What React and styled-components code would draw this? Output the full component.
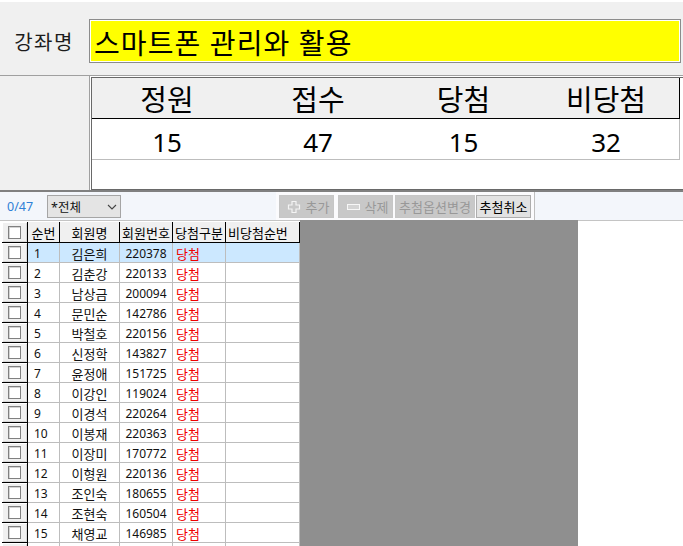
import React from "react"
import styled, { createGlobalStyle } from "styled-components"

const FONT = `"Noto Sans", "Noto Sans CJK KR", sans-serif`

const Global = createGlobalStyle`
    html, body {
        margin: 0;
        padding: 0;
        background: #fff;
        overflow: hidden;
    }
    #root {
        width: 683px;
        height: 546px;
        overflow: hidden;
    }
`

const Page = styled.div`
    width: 683px;
    height: 546px;
    padding-top: 2px;
    box-sizing: border-box;
    display: flex;
    flex-direction: column;
    font-family: ${FONT};
    overflow: hidden;
`

const TitleRow = styled.div`
    height: 74px;
    flex: none;
    box-sizing: border-box;
    background: #f0f0f0;
    border-bottom: 1px solid #a0a0a0;
    display: flex;
    align-items: flex-start;
    padding: 17px 2px 0 0;
`

const TitleLabel = styled.div`
    width: 89px;
    flex: none;
    height: 44px;
    box-sizing: border-box;
    padding-right: 1px;
    display: flex;
    align-items: center;
    justify-content: center;
    font-size: 20px;
    letter-spacing: 1.5px;
    color: #1c1c1c;
`

const TitleValue = styled.div`
    flex: 1;
    height: 44px;
    box-sizing: border-box;
    border: 1px solid #8c8c8c;
    padding: 1px;
    background: #fff;
`

const TitleFill = styled.div`
    height: 100%;
    box-sizing: border-box;
    background: #ffff00;
    display: flex;
    align-items: center;
    padding: 2px 0 0 3px;
    font-size: 28px;
    letter-spacing: 1.1px;
    color: #000;
`

const StatsRow = styled.div`
    height: 116px;
    flex: none;
    display: flex;
    box-sizing: border-box;
    border-bottom: 2px solid #808080;
`

const StatsSide = styled.div`
    width: 90px;
    flex: none;
    background: #f0f0f0;
    border-right: 1px solid #a0a0a0;
    box-sizing: border-box;
`

const StatsBox = styled.div`
    flex: 1;
    margin: 1px 0 0 1px;
    border-top: 1px solid #696969;
    border-left: 1px solid #696969;
    border-bottom: 1px solid #696969;
    background: #fff;
    display: flex;
    flex-direction: column;
`

const StatsHead = styled.div`
    height: 41px;
    box-sizing: border-box;
    width: 588px;
    background: #f0f0f0;
    border-bottom: 1px solid #000;
    border-right: 1px solid #000;
    display: flex;
`

const StatsBody = styled.div`
    height: 41px;
    width: 588px;
    box-sizing: border-box;
    border-bottom: 1px solid #bdbdbd;
    border-right: 1px solid #bdbdbd;
    display: flex;
`

const StatsCell = styled.div`
    width: ${p => p.$w}px;
    flex: none;
    display: flex;
    align-items: center;
    justify-content: center;
    box-sizing: border-box;
    padding-top: ${p => (p.$head ? 0 : 5)}px;
    font-size: ${p => (p.$head ? 29 : 26)}px;
    color: #000;
`

const Toolbar = styled.div`
    height: 29px;
    flex: none;
    box-sizing: border-box;
    background: #f3f6fb;
    border-bottom: 1px solid #c4c4c4;
    display: flex;
    align-items: flex-start;
`

const Count = styled.div`
    width: 47px;
    flex: none;
    padding: 6px 0 0 7px;
    box-sizing: border-box;
    font-size: 12.5px;
    color: #2f7fd6;
`

const Select = styled.div`
    width: 74px;
    height: 23px;
    flex: none;
    margin-top: 3px;
    box-sizing: border-box;
    border: 1px solid #a5a5a5;
    background: #e4e4e4;
    display: flex;
    align-items: center;
    justify-content: space-between;
    padding: 0 3px 0 3px;
    font-size: 12.5px;
    color: #111;
`

const ButtonGroup = styled.div`
    margin-left: 155px;
    height: 28px;
    flex: none;
    width: 259px;
    box-sizing: border-box;
    background: #fbfbfd;
    display: flex;
    padding: 3px 0 0 3px;
    border-right: 1px solid #bfbfbf;
`

const Button = styled.div`
    height: 23px;
    box-sizing: border-box;
    width: ${p => p.$w}px;
    margin-right: ${p => p.$gap || 0}px;
    padding-left: ${p => p.$pad || 0}px;
    flex: none;
    display: flex;
    align-items: center;
    justify-content: center;
    gap: 5px;
    border: 1px solid ${p => (p.$off ? "#c6c6c6" : "#adadad")};
    background: ${p => (p.$off ? "#c8c8c8" : "#e2e2e2")};
    color: ${p => (p.$off ? "#989898" : "#000")};
    font-size: 13px;
    white-space: nowrap;
`

const GridArea = styled.div`
    flex: 1;
    display: flex;
    min-height: 0;
`

const Grid = styled.div`
    width: 300px;
    flex: none;
    padding: 1px 0 0 2px;
    box-sizing: border-box;
`

const Blank = styled.div`
    width: 278px;
    flex: none;
    background: #8f8f8f;
    margin-top: -1px;
`

const Row = styled.div`
    display: flex;
    height: ${p => (p.$head ? 21 : 20)}px;
    box-sizing: border-box;
    background: ${p => (p.$active ? "#cce8ff" : "#fff")};
`

const CheckCell = styled.div`
    width: 26px;
    flex: none;
    box-sizing: border-box;
    background: #f0f0f0;
    border-right: 1px solid #000;
    border-bottom: 1px solid #000;
    box-shadow: inset 1px 1px 0 #fff, inset -1px -1px 0 #d9d9d9;
    display: flex;
    align-items: center;
    justify-content: center;
`

const Box = styled.span`
    width: 13px;
    height: 13px;
    box-sizing: border-box;
    display: block;
    background: #fff;
    border: 1px solid #808080;
    box-shadow: inset 1px 1px 0 #d4d4d4;
`

const Head = styled.div`
    width: ${p => p.$w}px;
    flex: none;
    box-sizing: border-box;
    background: #f0f0f0;
    border-right: 1px solid #000;
    border-bottom: 1px solid #000;
    display: flex;
    align-items: center;
    justify-content: ${p => (p.$left ? "flex-start" : "center")};
    padding-left: ${p => p.$left || 0}px;
    font-size: 13px;
    color: #000;
    white-space: nowrap;
`

const Cell = styled.div`
    width: ${p => p.$w}px;
    flex: none;
    box-sizing: border-box;
    border-right: 1px solid #bdbdbd;
    border-bottom: 1px solid #bdbdbd;
    display: flex;
    align-items: center;
    justify-content: ${p => (p.$left ? "flex-start" : "center")};
    padding-top: 1px;
    padding-left: ${p => p.$left || 0}px;
    font-size: ${p => p.$size || 12}px;
    color: ${p => p.$color || "#111"};
    white-space: nowrap;
`

const columns = [
    ["순번", 32],
    ["회원명", 60],
    ["회원번호", 53],
    ["당첨구분", 53],
    ["비당첨순번", 74, 2],
]

const members = [
    ["김은희", "220378"],
    ["김춘강", "220133"],
    ["남상금", "200094"],
    ["문민순", "142786"],
    ["박철호", "220156"],
    ["신정학", "143827"],
    ["윤정애", "151725"],
    ["이강인", "119024"],
    ["이경석", "220264"],
    ["이봉재", "220363"],
    ["이장미", "170772"],
    ["이형원", "220136"],
    ["조인숙", "180655"],
    ["조현숙", "160504"],
    ["채영교", "146985"],
]

function PlusIcon() {
    return (
        <svg width="14" height="14" viewBox="0 0 14 14" fill="none">
            <path
                d="M5 1.5h4v3.5h3.5v4H9v3.5H5V9H1.5V5H5z"
                stroke="#f4f4f4"
                strokeWidth="1.2"
            />
        </svg>
    )
}

function MinusIcon() {
    return (
        <svg width="13" height="8" viewBox="0 0 13 8" fill="none">
            <rect x="0.5" y="1.5" width="12" height="5" fill="#d4d4d4" stroke="#f7f7f7" />
        </svg>
    )
}

function Chevron() {
    return (
        <svg width="10" height="6" viewBox="0 0 10 6" fill="none">
            <path d="M1 1l4 4 4-4" stroke="#444" strokeWidth="1.1" />
        </svg>
    )
}

function App() {
    return (
        <Page>
            <Global />
            <TitleRow>
                <TitleLabel>강좌명</TitleLabel>
                <TitleValue>
                    <TitleFill>스마트폰 관리와 활용</TitleFill>
                </TitleValue>
            </TitleRow>

            <StatsRow>
                <StatsSide />
                <StatsBox>
                    <StatsHead>
                        <StatsCell $head $w={150}>정원</StatsCell>
                        <StatsCell $head $w={152}>접수</StatsCell>
                        <StatsCell $head $w={139}>당첨</StatsCell>
                        <StatsCell $head $w={146}>비당첨</StatsCell>
                    </StatsHead>
                    <StatsBody>
                        <StatsCell $w={150}>15</StatsCell>
                        <StatsCell $w={152}>47</StatsCell>
                        <StatsCell $w={139}>15</StatsCell>
                        <StatsCell $w={146}>32</StatsCell>
                    </StatsBody>
                </StatsBox>
            </StatsRow>

            <Toolbar>
                <Count>0/47</Count>
                <Select>
                    <span>*전체</span>
                    <Chevron />
                </Select>
                <ButtonGroup>
                    <Button $off $w={55} $gap={4} $pad={3}>
                        <PlusIcon />
                        추가
                    </Button>
                    <Button $off $w={55} $gap={2} $pad={4}>
                        <MinusIcon />
                        삭제
                    </Button>
                    <Button $off $w={80} $gap={1}>추첨옵션변경</Button>
                    <Button $w={55}>추첨취소</Button>
                </ButtonGroup>
            </Toolbar>

            <GridArea>
                <Grid>
                    <Row $head>
                        <CheckCell>
                            <Box />
                        </CheckCell>
                        {columns.map(([label, width, left]) => (
                            <Head key={label} $w={width} $left={left}>{label}</Head>
                        ))}
                    </Row>
                    {members.map(([name, number], index) => (
                        <Row key={number} $active={index === 0}>
                            <CheckCell>
                                <Box />
                            </CheckCell>
                            <Cell $w={32} $left={6}>{index + 1}</Cell>
                            <Cell $w={60} $size={13}>{name}</Cell>
                            <Cell $w={53}>{number}</Cell>
                            <Cell $w={53} $left={3} $size={13} $color="#f00000">당첨</Cell>
                            <Cell $w={74} />
                        </Row>
                    ))}
                    <Row>
                        <CheckCell />
                        <Cell $w={32} />
                        <Cell $w={60} />
                        <Cell $w={53} />
                        <Cell $w={53} />
                        <Cell $w={74} />
                    </Row>
                </Grid>
                <Blank />
            </GridArea>
        </Page>
    )
}

export default App
